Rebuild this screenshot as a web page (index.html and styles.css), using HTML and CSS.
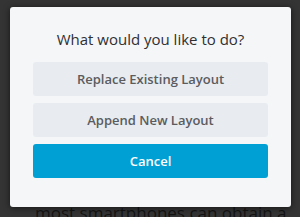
FILE: index.html
```html
<!DOCTYPE html>
<html>
<head>
  <meta charset="UTF-8">
  <title>Layout</title>
  <link rel="stylesheet" href="styles.css">
</head>
<body>
  <div class="page">
    <p class="page-text">most smartphones can obtain a</p>
  </div>

  <!-- 레이아웃 선택 대화상자 -->
  <div class="dialog">
    <h2 class="dialog-title">What would you like to do?</h2>
    <div class="dialog-actions">
      <button class="btn btn-light">Replace Existing Layout</button>
      <button class="btn btn-light">Append New Layout</button>
      <button class="btn btn-primary">Cancel</button>
    </div>
  </div>
</body>
</html>
```

FILE: styles.css
```css
/* 배경 페이지 */
body {
  margin: 0;
  width: 300px;
  height: 217px;
  overflow: hidden;
  background-color: #343434;
  font-family: "Open Sans", "Noto Sans", sans-serif;
}

.page {
  padding: 203px 0 0 35px;
}

.page-text {
  margin: 0;
  font-size: 17px;
  line-height: 20px;
  color: #141414;
  white-space: nowrap;
}

/* 대화상자 */
.dialog {
  position: absolute;
  left: 10px;
  top: 7px;
  width: 281px;
  height: 200px;
  box-sizing: border-box;
  padding: 22px 23px 0;
  background-color: #f5f6f8;
  border-radius: 3px;
  box-shadow: 0 1px 6px rgba(0, 0, 0, 0.6);
}

.dialog-title {
  margin: 0 0 13px;
  text-align: center;
  font-size: 15px;
  font-weight: normal;
  line-height: 20px;
  color: #2f3032;
}

.dialog-actions {
  display: flex;
  flex-direction: column;
  gap: 7px;
}

.btn {
  height: 34px;
  border: none;
  border-radius: 3px;
  font-family: inherit;
  font-size: 13px;
  font-weight: 600;
  cursor: pointer;
}

.btn-light {
  background-color: #e8ebef;
  color: #5a5c60;
}

.btn-primary {
  background-color: #009fd4;
  color: #fff;
}
```
